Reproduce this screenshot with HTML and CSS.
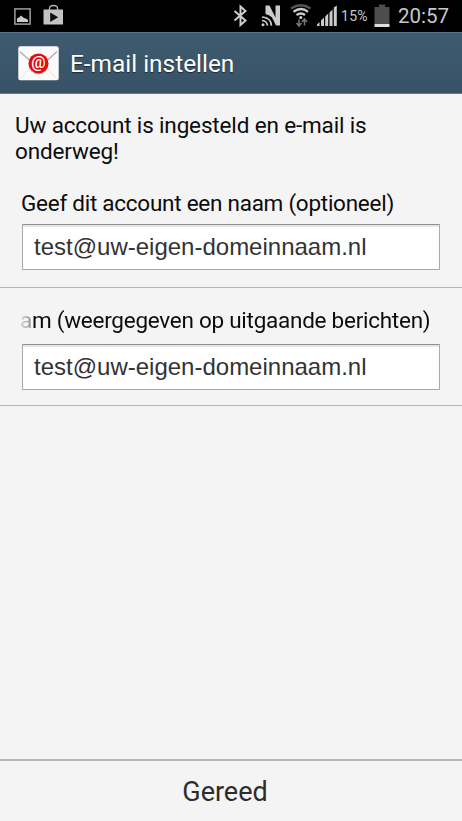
FILE: index.html
```html
<!DOCTYPE html>
<html lang="nl">
<head>
    <meta charset="UTF-8">
    <meta name="viewport" content="width=device-width, initial-scale=1.0">
    <title>E-mail instellen</title>
    <link rel="stylesheet" href="styles.css">
</head>
<body>
    <div class="status-bar">
        <svg class="status-left" width="100" height="32" viewBox="0 0 100 32">
            <rect x="14.9" y="8.9" width="15.2" height="15.2" fill="none" stroke="#aaa" stroke-width="1.4"/>
            <path d="M17 22v-3.5l2-1 2-2 3 2.5 2 .5 2 1.500V22z" fill="#ccc"/>
            <path d="M49.500 10V8.500q0-3 4-3t4 3V10" fill="none" stroke="#b5b5b5" stroke-width="1.300"/>
            <path d="M43.500 9.500h19.500v15H43.500z" fill="#c4c4c4"/>
            <path d="M50.200 12.500v9.500l8-4.700z" fill="#111"/>
        </svg>
        <svg class="status-icons" width="112" height="32" viewBox="228 0 112 32">
            <path d="M234.500 11l11 9.500-5 4.500V6.500l5 4.500L234.500 20.500" fill="none" stroke="#ccc" stroke-width="2"/>
            <path d="M265.500 14V5.500h4l6 12V5.500h4.500V25.500h-4l-4-8q-2-2.500-6.500-3.500z" fill="#ccc"/>
            <path d="M262 17q9 .5 9.500 8.700M262 20.500q5 .5 5.500 5.200" fill="none" stroke="#ccc" stroke-width="1.600"/>
            <circle cx="263" cy="24.700" r="1.500" fill="#ccc"/>
            <g fill="none" stroke-width="2.300">
                <path d="M291 8.500q9.800-6.500 19.500 0" stroke="#555"/>
                <path d="M293.500 11.800q7.500-5.500 14.500 0M296.500 15q4.500-3 8.500 0" stroke="#ccc"/>
            </g>
            <circle cx="300.800" cy="17.500" r="1.600" fill="#ccc"/>
            <g fill="none" stroke="#777" stroke-width="1.500">
                <path d="M299 19.500v6.500M296.500 23l2.500 3 2.500-3"/>
                <path d="M304.500 25.500v-6.500M302 22l2.500-3 2.500 3"/>
            </g>
            <path d="M317 26v-1.500l2.500-2.500v4zM321 26v-5.500l3-3V26zM325.200 26V16.500l3-3V26zM329.500 26V12.500l3-3V26zM333.800 26V7.500l3-2V26z" fill="#ccc"/>
        </svg>
        <span class="battery-level">15%</span>
        <svg class="battery" width="16" height="32" viewBox="0 0 16 32">
            <path d="M.5 7h4.500V4.500h6V7h4.500v17H.5z" fill="#4d4d4d"/>
            <rect x=".5" y="24" width="15" height="3" fill="#ddd"/>
        </svg>
        <span class="clock">20:57</span>
    </div>

    <div class="header">
        <svg class="mail-icon" width="41" height="35" viewBox="0 0 41 35">
            <rect x=".3" y=".3" width="40.400" height="34" rx="2" fill="#fbfbfb"/>
            <path d="M2 33l14-15M39 33L25 18" stroke="#e3e3e3" fill="none"/>
            <path d="M2 5.500l13 12q5.500 5 11 0l13-12" stroke="#aaa" stroke-width="1.200" fill="none"/>
            <circle cx="20.500" cy="18.400" r="10" fill="#999" opacity=".5"/>
            <circle cx="20.500" cy="17.400" r="10" fill="#e30b0b"/>
            <text x="20.500" y="22" text-anchor="middle" class="mail-at">@</text>
        </svg>
        <h1>E-mail instellen</h1>
    </div>

    <div class="content">
        <p class="intro">Uw account is ingesteld en e-mail is onderweg!</p>
        <div class="field">
            <div class="label">Geef dit account een naam (optioneel)</div>
            <div class="input">test@uw-eigen-domeinnaam.nl</div>
        </div>
        <div class="field field-sender">
            <div class="label label-sender">am (weergegeven op uitgaande berichten)</div>
            <div class="input">test@uw-eigen-domeinnaam.nl</div>
        </div>
    </div>

    <div class="footer">Gereed</div>
</body>
</html>
```

FILE: styles.css
```css
* {
    margin: 0;
    padding: 0;
    box-sizing: border-box;
}

body {
    background-color: #f4f4f4;
    display: flex;
    flex-direction: column;
    height: 821px;
    overflow: hidden;
    font-family: 'Roboto', sans-serif;
    color: #0c0c0c;
}

.status-bar {
    display: flex;
    height: 32px;
    background-color: #000;
    color: #c8c8c8;
    line-height: 32px;
}

.status-icons {
    margin-left: 128px;
}

.battery-level {
    width: 34px;
    padding-left: 1px;
    font-size: 14px;
    letter-spacing: 0.3px;
    line-height: 33px;
}

.clock {
    margin-left: 8px;
    font-size: 20.5px;
}

.header {
    display: flex;
    align-items: center;
    height: 62px;
    padding-left: 18px;
    background: linear-gradient(#3f5b70, #375265);
    border-top: 1px solid #56718a;
    border-bottom: 1px solid #6b7b86;
}

.mail-at {
    font-size: 16px;
    font-weight: 500;
    fill: #fff;
}

.header h1 {
    margin-left: 11px;
    font-size: 24.4px;
    font-weight: 400;
    color: #fff;
    text-shadow: 0 1px 1px #1c2a34;
}

.content {
    flex: 1;
}

.intro {
    padding: 19px 60px 0 15px;
    font-size: 22.5px;
    letter-spacing: -0.15px;
    line-height: 25.5px;
}

.field {
    height: 124px;
    padding: 26px 22px 0;
    border-bottom: 1px solid #b5b5b5;
}

.field-sender {
    height: 118px;
    padding-top: 19px;
}

.label {
    height: 26px;
    margin-left: -1px;
    font-size: 22.5px;
    letter-spacing: -0.26px;
    line-height: 26px;
    white-space: nowrap;
}

.label-sender {
    margin-left: -2px;
    margin-bottom: 11px;
    background: linear-gradient(to right, #ddd, #888 12px, #0c0c0c 13px);
    background-clip: text;
    color: transparent;
}

.input {
    height: 46px;
    margin-top: 8px;
    padding-left: 11px;
    background-color: #fff;
    border: 1px solid #aaa;
    border-top-color: #8f8f8f;
    border-radius: 1px;
    box-shadow: inset 0 2px 1px #e6e6e6;
    font-family: 'Liberation Sans', sans-serif;
    font-size: 24px;
    line-height: 44px;
    color: #333;
}

.label-sender + .input {
    margin-top: 0;
}

.footer {
    height: 62px;
    border-top: 2px solid #b8b8b8;
    padding-right: 12px;
    text-align: center;
    font-size: 27px;
    line-height: 62px;
    color: #2d2d2d;
}
```
